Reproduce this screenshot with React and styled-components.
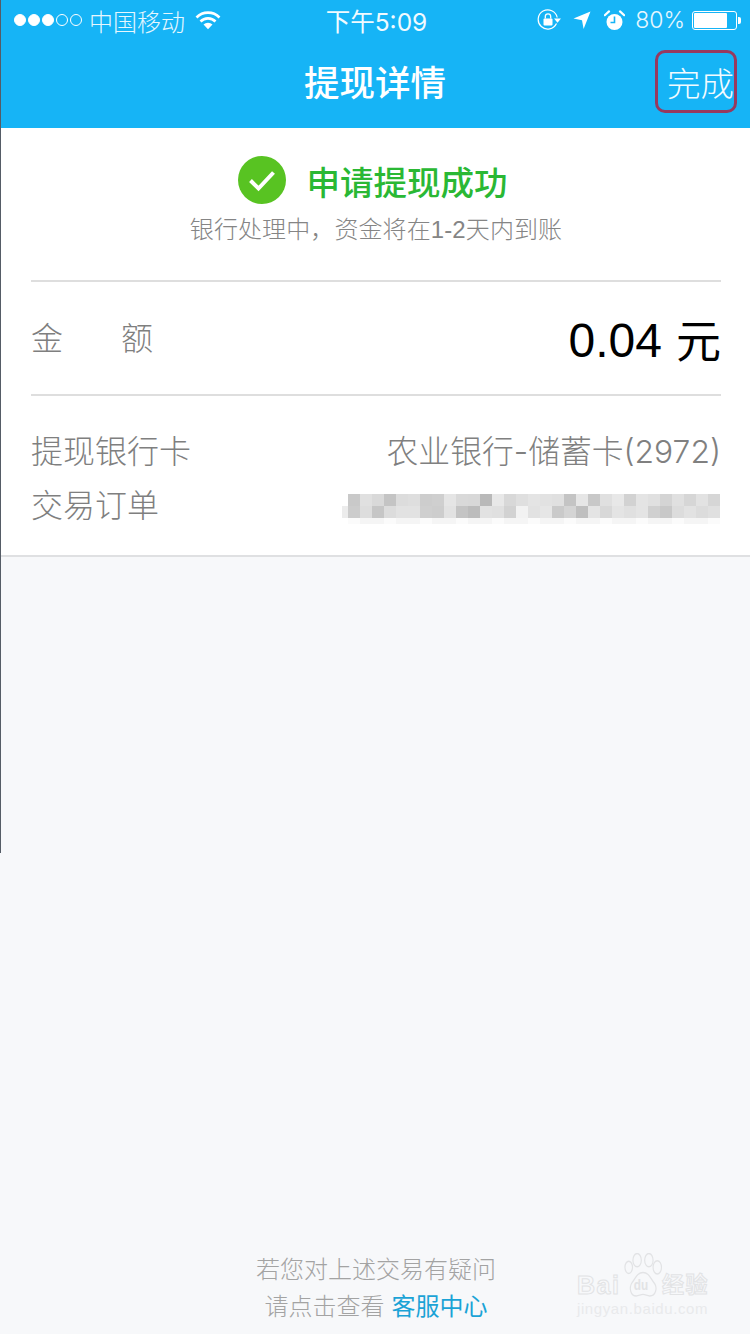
import React from "react";
import styled, { createGlobalStyle } from "styled-components";

const GlobalStyle = createGlobalStyle`
  html, body {
    margin: 0;
    padding: 0;
    background: #f7f8fa;
  }
  body {
    font-family: "Liberation Sans", "Noto Sans CJK SC", sans-serif;
  }
`;

const lightStack = `Inter, "Noto Sans CJK SC", sans-serif`;

const Page = styled.div`
  position: relative;
  width: 750px;
  height: 1334px;
  display: flex;
  flex-direction: column;
  background: #f7f8fa;
  overflow: hidden;
`;

const EdgeLine = styled.div`
  position: absolute;
  left: 0;
  top: 0;
  width: 1px;
  height: 853px;
  background: #555c66;
`;

const Header = styled.header`
  background: #16b4f6;
  height: 128px;
  color: #fff;
  display: flex;
  flex-direction: column;
`;

const StatusBar = styled.div`
  height: 40px;
  display: grid;
  grid-template-columns: 1fr auto 1fr;
  align-items: center;
  padding: 0 9px 0 14px;
`;

const StatusLeft = styled.div`
  display: flex;
  align-items: center;
  font-size: 24px;
  font-weight: 300;
  color: #e6f7fe;
`;

const StatusRight = styled.div`
  display: flex;
  align-items: center;
  justify-content: flex-end;
  font-family: ${lightStack};
  font-size: 23px;
  font-weight: 300;
  color: #e6f7fe;
`;

const Clock = styled.div`
  font-family: ${lightStack};
  font-size: 24.5px;
  font-weight: 400;
  color: #f0faff;
  padding-right: 2px;
`;

const Signal = styled.div`
  display: flex;
  gap: 2px;
  margin-right: 7px;
`;

const Dot = styled.span`
  width: 12px;
  height: 12px;
  box-sizing: border-box;
  border-radius: 50%;
  border: 1px solid #fff;
  background: ${(p) => (p.$on ? "#fff" : "transparent")};
`;

const Percent = styled.span`
  margin: 0 7px 0 10px;
`;

const Battery = styled.div`
  display: flex;
  align-items: center;
`;

const BatteryBody = styled.div`
  width: 45px;
  height: 19px;
  box-sizing: border-box;
  border: 1px solid #fff;
  border-radius: 3px;
  padding: 1px;
`;

const BatteryFill = styled.div`
  height: 100%;
  background: #fff;
  border-radius: 1px;
`;

const BatteryCap = styled.div`
  width: 3px;
  height: 7px;
  margin-left: 1px;
  background: #fff;
  border-radius: 0 2px 2px 0;
`;

const NavBar = styled.div`
  position: relative;
  flex: 1;
  display: flex;
  align-items: center;
  justify-content: center;
  padding-top: 2px;
`;

const NavTitle = styled.h1`
  margin: 0;
  font-size: 35.5px;
  font-weight: 500;
  line-height: 1;
`;

const DoneBox = styled.div`
  position: absolute;
  left: 655px;
  top: 10px;
  width: 82px;
  height: 63px;
  box-sizing: border-box;
  border: 3px solid #97395f;
  border-radius: 10px;
`;

const DoneText = styled.span`
  position: absolute;
  left: 667px;
  top: 28px;
  font-size: 33.5px;
  line-height: 1;
  font-weight: 300;
  color: #f2fbff;
`;

const Card = styled.section`
  background: #fff;
  height: 427px;
  border-bottom: 2px solid #dfe0e2;
  padding: 0 29px 0 31px;
`;

const Success = styled.div`
  height: 154px;
  border-bottom: 2px solid #dedede;
  display: flex;
  flex-direction: column;
  align-items: center;
  padding-top: 27px;
  box-sizing: border-box;
`;

const SuccessTitle = styled.div`
  display: flex;
  align-items: center;
  gap: 21px;
  height: 50px;
  padding-right: 7px;
  color: #2ab834;
  font-size: 33.5px;
  font-weight: 500;
`;

const SuccessNote = styled.div`
  font-size: 24px;
  line-height: 30px;
  font-weight: 300;
  letter-spacing: 0.1px;
  color: #858585;
  margin-top: 10px;
`;

const AmountRow = styled.div`
  height: 114px;
  border-bottom: 2px solid #dedede;
  display: flex;
  align-items: center;
  justify-content: space-between;
  box-sizing: border-box;
  padding-bottom: 5px;
`;

const Label = styled.span`
  font-size: 32px;
  font-weight: 300;
  color: #7f7f7f;
`;

const SpacedLabel = styled(Label)`
  display: flex;
  width: 122px;
  justify-content: space-between;
`;

const Amount = styled.span`
  font-size: 48px;
  color: #000;
  display: flex;
  align-items: baseline;
  gap: 14px;
  margin-top: 4px;
`;

const AmountUnit = styled.span`
  font-size: 45px;
  font-weight: 400;
  position: relative;
  top: 1px;
`;

const Details = styled.div`
  padding-top: 31px;
  display: flex;
  flex-direction: column;
  gap: 10px;
`;

const DetailRow = styled.div`
  height: 44px;
  display: flex;
  align-items: center;
  justify-content: space-between;
`;

const Value = styled.span`
  font-family: ${lightStack};
  font-size: 31.8px;
  font-weight: 300;
  color: #808080;
`;

const Mosaic = styled.div`
  display: flex;
  flex-direction: column;
  align-items: flex-end;
  margin: 12px 1px 0 0;
`;

const MosaicRow = styled.div`
  display: flex;
  height: ${(p) => p.$h}px;
`;

const MosaicCell = styled.span`
  width: 12px;
  height: 100%;

  ${MosaicRow}[data-lead] &:first-child {
    width: 6px;
  }
`;

const Footer = styled.footer`
  margin-top: auto;
  padding-bottom: 9px;
  padding-left: 2px;
  display: flex;
  flex-direction: column;
  align-items: center;
  font-size: 24px;
  line-height: 37px;
  font-weight: 300;
  color: #a3a3a3;
`;

const ServiceLink = styled.a`
  color: #1ba3d6;
  margin-left: 7px;
  font-weight: 400;
`;

const Watermark = styled.div`
  position: absolute;
  left: 577px;
  top: 1253px;
  width: 135px;
  height: 70px;
`;

const WatermarkWord = styled.span`
  position: absolute;
  top: 17px;
  left: ${(p) => p.$left}px;
  font-size: ${(p) => p.$size}px;
  line-height: 30px;
  font-weight: 700;
  letter-spacing: 1.5px;
  color: #f7f8fa;
  -webkit-text-stroke: 1px #e2e3e5;
  white-space: nowrap;
`;

const WatermarkUrl = styled.div`
  position: absolute;
  left: 0;
  top: 47px;
  font-size: 15px;
  line-height: 17px;
  letter-spacing: 0.6px;
  color: #e9eaec;
  white-space: nowrap;
`;

const PawIcon = styled.svg`
  position: absolute;
  left: 45px;
  top: 0;
`;

const WifiIcon = () => (
  <svg width="26" height="20" viewBox="0 0 26 20" style={{ marginLeft: 10 }}>
    <path d="M1.500 7.500a16 16 0 0 1 23 0" fill="none" stroke="#fff" strokeWidth="2.6" />
    <path d="M5.500 11.500a10.500 10.500 0 0 1 15 0" fill="none" stroke="#fff" strokeWidth="2.6" />
    <path d="M8.500 14.600a6.200 6.200 0 0 1 9 0L13 19.200z" fill="#fff" />
  </svg>
);

const RotationLockIcon = () => (
  <svg width="25" height="22" viewBox="0 0 25 22">
    <path d="M19.500 14.500A9.600 9.600 0 1 1 20.200 8.500" fill="none" stroke="#fff" strokeWidth="1.2" />
    <path d="M17 9.500h7l-3.500 4.200z" fill="#fff" />
    <rect x="6.500" y="9.500" width="9" height="7" rx="1" fill="#fff" />
    <path d="M8.300 9.500V7.600a2.700 2.700 0 0 1 5.400 0v1.900" fill="none" stroke="#fff" strokeWidth="1.3" />
  </svg>
);

const LocationIcon = () => (
  <svg width="18" height="18" viewBox="0 0 18 18" style={{ marginLeft: 11 }}>
    <path d="M17.500 0.500 10.600 18 9 9.200 0.500 7.600z" fill="#fff" />
  </svg>
);

const AlarmIcon = () => (
  <svg width="21" height="21" viewBox="0 0 21 21" style={{ marginLeft: 13 }}>
    <circle cx="10.500" cy="12" r="8" fill="#fff" />
    <path d="M10.500 6.500v6H6.500" fill="none" stroke="#16b4f6" strokeWidth="1.6" />
    <path d="M0.800 5.200 5 1.400M20.200 5.200 16 1.400" stroke="#fff" strokeWidth="2.2" strokeLinecap="round" />
  </svg>
);

const CheckBadge = () => (
  <svg width="48" height="48" viewBox="0 0 48 48">
    <circle cx="24" cy="24" r="24" fill="#58c322" />
    <path d="M12.500 24.500 20.500 32.500 35.500 16.500" fill="none" stroke="#fff" strokeWidth="4" />
  </svg>
);

const Paw = () => (
  <PawIcon width="42" height="47" viewBox="0 0 50 46" preserveAspectRatio="none">
    <g fill="none" stroke="#e2e3e5" strokeWidth="1.4">
      <ellipse cx="8" cy="14" rx="4.500" ry="6" />
      <ellipse cx="18" cy="7" rx="5" ry="6.500" />
      <ellipse cx="32" cy="7" rx="5" ry="6.500" />
      <ellipse cx="42" cy="14" rx="5" ry="6.500" />
      <path d="M25 19c7 0 9 6 13 10 5 5 2 13-5 13-3 0-5-1.500-8-1.500S20 42 17 42c-7 0-9-8-5-13 4-4 6-10 13-10z" />
    </g>
    <text x="14" y="36" fontSize="14" fontWeight="700" fill="#e2e3e5" fontFamily="Liberation Sans, sans-serif">du</text>
  </PawIcon>
);

const mosaicTop = [
  "#c9c9c9", "#e0e0e0", "#d9d9d9", "#c4c4c4", "#dcdcdc", "#dedede", "#cdcdcd", "#cfcfcf",
  "#e5e5e5", "#d9d9d9", "#d8d8d8", "#b9b9b9", "#e8e8e8", "#d8d8d8", "#dfdfdf", "#e4e4e4",
  "#e2e2e2", "#e0e0e0", "#c4c4c4", "#e6e6e6", "#c8c8c8", "#e0e0e0", "#e8e8e8", "#d2d2d2",
  "#e4e4e4", "#e0e0e0", "#d4d4d4", "#e0e0e0", "#d6d6d6", "#e2e2e2", "#d6d6d6",
];

const mosaicBottom = [
  "#ececec", "#cccccc", "#dddddd", "#c6c6c6", "#dcdcdc", "#e2e2e2", "#e2e2e2", "#cfcfcf",
  "#cdcdcd", "#e2e2e2", "#c4c4c4", "#bcbcbc", "#e2e2e2", "#e0e0e0", "#d2d2d2", "#f2f2f2",
  "#e2e2e2", "#e6e6e6", "#cacaca", "#d4d4d4", "#bfbfbf", "#e4e4e4", "#d8d8d8", "#e4e4e4",
  "#e0e0e0", "#e4e4e4", "#d0d0d0", "#c8c8c8", "#dcdcdc", "#e2e2e2", "#dcdcdc", "#e0e0e0",
];

const mosaicFaint = mosaicTop.map((c, i) => (i % 3 === 0 ? "#fbfbfb" : "#f5f5f5"));

const App = () => {
  return (
    <Page>
      <GlobalStyle />
      <EdgeLine />
      <Header>
        <StatusBar>
          <StatusLeft>
            <Signal>
              {[true, true, true, false, false].map((on, i) => (
                <Dot key={i} $on={on} />
              ))}
            </Signal>
            中国移动
            <WifiIcon />
          </StatusLeft>
          <Clock>下午5:09</Clock>
          <StatusRight>
            <RotationLockIcon />
            <LocationIcon />
            <AlarmIcon />
            <Percent>80%</Percent>
            <Battery>
              <BatteryBody>
                <BatteryFill style={{ width: "80%" }} />
              </BatteryBody>
              <BatteryCap />
            </Battery>
          </StatusRight>
        </StatusBar>
        <NavBar>
          <NavTitle>提现详情</NavTitle>
          <DoneText>完成</DoneText>
          <DoneBox />
        </NavBar>
      </Header>

      <Card>
        <Success>
          <SuccessTitle>
            <CheckBadge />
            申请提现成功
          </SuccessTitle>
          <SuccessNote>银行处理中，资金将在1-2天内到账</SuccessNote>
        </Success>
        <AmountRow>
          <SpacedLabel>
            <span>金</span>
            <span>额</span>
          </SpacedLabel>
          <Amount>
            0.04
            <AmountUnit>元</AmountUnit>
          </Amount>
        </AmountRow>
        <Details>
          <DetailRow>
            <Label>提现银行卡</Label>
            <Value>农业银行-储蓄卡(2972)</Value>
          </DetailRow>
          <DetailRow>
            <Label>交易订单</Label>
            <Mosaic>
              <MosaicRow $h={12}>
                {mosaicTop.map((c, i) => (
                  <MosaicCell key={i} style={{ background: c }} />
                ))}
              </MosaicRow>
              <MosaicRow $h={12} data-lead>
                {mosaicBottom.map((c, i) => (
                  <MosaicCell key={i} style={{ background: c }} />
                ))}
              </MosaicRow>
              <MosaicRow $h={6}>
                {mosaicFaint.map((c, i) => (
                  <MosaicCell key={i} style={{ background: c }} />
                ))}
              </MosaicRow>
            </Mosaic>
          </DetailRow>
        </Details>
      </Card>

      <Footer>
        <div>若您对上述交易有疑问</div>
        <div>
          请点击查看
          <ServiceLink>客服中心</ServiceLink>
        </div>
      </Footer>

      <Watermark>
        <WatermarkWord $left={0} $size={25}>Bai</WatermarkWord>
        <WatermarkWord $left={85} $size={22}>经验</WatermarkWord>
        <Paw />
        <WatermarkUrl>jingyan.baidu.com</WatermarkUrl>
      </Watermark>
    </Page>
  );
};

export default App;
